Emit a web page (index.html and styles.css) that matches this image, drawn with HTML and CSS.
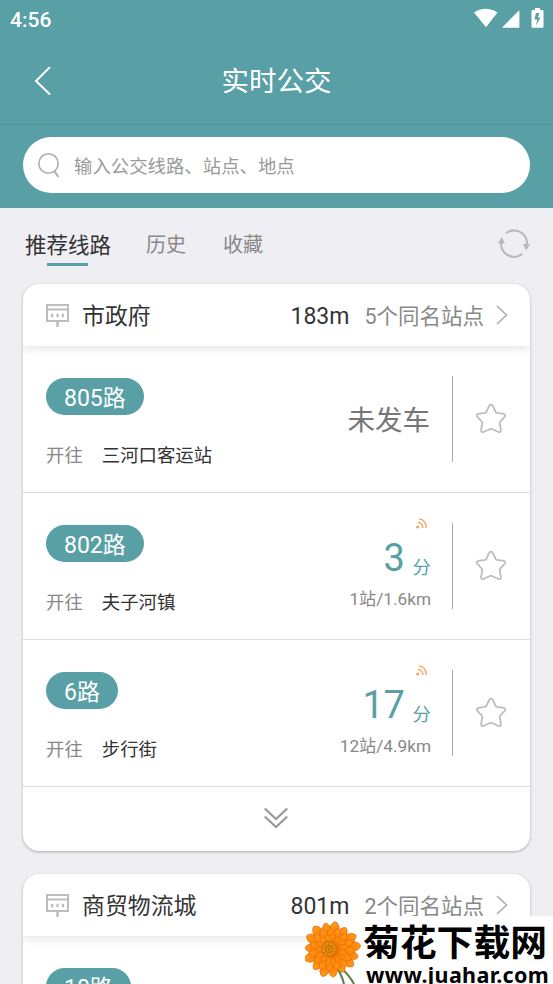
FILE: index.html
```html
<!DOCTYPE html>
<html lang="zh-CN">
<head>
<meta charset="utf-8">
<title>实时公交</title>
<link rel="stylesheet" href="styles.css">
</head>
<body>
<svg class="defs" width="0" height="0">
  <symbol id="board" viewBox="0 0 23 23">
    <path fill="none" stroke="#bdbdbd" stroke-width="2" d="M1 1h21v16H1zM1 5.500h21"/>
    <path fill="#bdbdbd" d="M5 9.700h2.300v3.600H5zM10.400 9.700h2.300v3.600h-2.300zM15.800 9.700h2.300v3.600h-2.300zM10.300 17h2.500v6h-2.500z"/>
  </symbol>
  <symbol id="star" viewBox="0 0 32 32">
    <path fill="none" stroke="#bdbdbd" stroke-width="1.800" stroke-linejoin="round" d="M14.300 2.600Q16 .5 17.700 2.600L20.700 9Q21 9.600 22 9.800L28.500 10.800Q31.400 11.500 29.600 13.800L25.200 18.600Q24.500 19.300 24.700 20.200L25.900 27Q26.100 29.800 23.500 29L17 26Q16 25.500 15 26L8.500 29Q5.900 29.800 6.100 27L7.300 20.200Q7.500 19.300 6.800 18.600L2.400 13.800Q.6 11.500 3.500 10.800L10 9.800Q11 9.600 11.300 9Z"/>
  </symbol>
  <symbol id="next" viewBox="0 0 12 20">
    <path fill="none" stroke="#b0b0b0" stroke-width="1.700" d="M1 1l9.500 9L1 19"/>
  </symbol>
  <symbol id="signal" viewBox="0 0 11 11">
    <circle cx="1.700" cy="9.200" r="1.400" fill="#f0a050"/>
    <path fill="none" stroke="#f0a050" stroke-width="1.300" d="M2 4.300a5 5 0 0 1 4.700 5.700M3 .9a8 8 0 0 1 7.100 9"/>
  </symbol>
</svg>

<header class="top">
  <div class="status">
    <span class="clock">4:56</span>
    <svg class="status-icons" width="72" height="22" viewBox="0 0 72 22" fill="#fff">
      <path d="M0 4.500Q11.500-3 23.500 4.500L12 19.200Z"/>
      <path d="M45.400 2v17.700H28Z"/>
      <path fill-rule="evenodd" d="M58.500 2H61V0h5v2h2.500q1 0 1 1v15.700q0 1-1 1h-10q-1 0-1-1V3q0-1 1-1ZM62 5l-1.500 6.500h2.700L62 17.500l4.500-8h-2.700L65.500 5Z"/>
    </svg>
  </div>
  <div class="titlebar">
    <svg class="back" width="18" height="30" viewBox="0 0 18 30"><path fill="none" stroke="#fff" stroke-width="2" stroke-linecap="round" d="M15.500 .5L2 14l13.500 13"/></svg>
    <h1>实时公交</h1>
  </div>
  <div class="search-area">
    <div class="search">
      <svg width="24" height="26" viewBox="0 0 24 26" fill="none" stroke="#b0b0b0" stroke-width="1.600"><circle cx="10.500" cy="11.500" r="9.700"/><path stroke-width="2" d="M16.300 19.200L20.500 25"/></svg>
      <span>输入公交线路、站点、地点</span>
    </div>
  </div>
</header>

<nav class="tabs">
  <span class="tab active">推荐线路</span>
  <span class="tab">历史</span>
  <span class="tab">收藏</span>
  <svg class="refresh" width="32" height="30" viewBox="0 0 32 30">
    <path fill="none" stroke="#b8b8b8" stroke-width="2" d="M8 4.300A13 13 0 0 1 29 15M24.500 24.800A13 13 0 0 1 3.200 14"/>
    <path fill="#b8b8b8" d="M24.800 15H32l-3.800 6.500ZM0 14.500h7.200L3.600 8.300Z"/>
  </svg>
</nav>

<main class="list">
  <section class="card">
    <div class="station">
      <svg class="board"><use href="#board"/></svg>
      <h2>市政府</h2>
      <span class="distance">183m</span>
      <span class="same">5个同名站点</span>
      <svg class="next"><use href="#next"/></svg>
    </div>
    <div class="route">
      <div class="line"><span class="pill">805路</span><p><span class="to">开往</span>三河口客运站</p></div>
      <div class="eta idle">未发车</div>
      <div class="fav"><svg><use href="#star"/></svg></div>
    </div>
    <div class="route">
      <div class="line"><span class="pill">802路</span><p><span class="to">开往</span>夫子河镇</p></div>
      <div class="eta"><svg class="signal"><use href="#signal"/></svg><div class="minutes"><b>3</b>分</div><div class="remain">1站/1.6km</div></div>
      <div class="fav"><svg><use href="#star"/></svg></div>
    </div>
    <div class="route">
      <div class="line"><span class="pill">6路</span><p><span class="to">开往</span>步行街</p></div>
      <div class="eta"><svg class="signal"><use href="#signal"/></svg><div class="minutes"><b>17</b>分</div><div class="remain">12站/4.9km</div></div>
      <div class="fav"><svg><use href="#star"/></svg></div>
    </div>
    <div class="more">
      <svg width="24" height="21" viewBox="0 0 24 21" fill="none" stroke="#999" stroke-width="2.200"><path d="M.7 .5L12 11 23.300 .5M.7 8.500L12 19 23.300 8.500"/></svg>
    </div>
  </section>

  <section class="card last">
    <div class="station">
      <svg class="board"><use href="#board"/></svg>
      <h2>商贸物流城</h2>
      <span class="distance">801m</span>
      <span class="same">2个同名站点</span>
      <svg class="next"><use href="#next"/></svg>
    </div>
    <div class="route">
      <div class="line"><span class="pill">10路</span></div>
    </div>
  </section>
</main>

<aside class="watermark">
  <svg class="flower" width="60" height="68" viewBox="0 0 60 68">
    <defs>
      <radialGradient id="glow" gradientUnits="userSpaceOnUse" cx="0" cy="0" r="28"><stop offset=".15" stop-color="#d65600"/><stop offset=".5" stop-color="#fa7a05"/><stop offset="1" stop-color="#ff9a18"/></radialGradient>
      <path id="p" d="M0 0C-4-7-6-17-4-24Q0-32 4-24C6-17 4-7 0 0Z"/>
      <g id="tri"><use href="#p"/><use href="#p" transform="rotate(118) scale(.95)"/><use href="#p" transform="rotate(242)"/></g>
      <g id="ring"><use href="#tri"/><use href="#tri" transform="rotate(25) scale(.93)"/><use href="#tri" transform="rotate(50)"/><use href="#tri" transform="rotate(73) scale(1.030)"/><use href="#tri" transform="rotate(97) scale(.96)"/></g>
    </defs>
    <path d="M30 50Q36 56 39 68M36 52Q45 60 49 68" fill="none" stroke="#63804a" stroke-width="2.200"/>
    <g transform="translate(26.500 34)" fill="url(#glow)" stroke="#dc6000" stroke-width=".6">
      <use href="#ring" transform="rotate(8) scale(1.020)"/>
      <use href="#ring" transform="rotate(19) scale(.8)"/>
      <use href="#ring" transform="rotate(5) scale(.56)"/>
    </g>
    <circle cx="24" cy="33" r="8" fill="#d27300"/>
    <circle cx="24" cy="33" r="5.500" fill="none" stroke="#eda02b" stroke-width="2.500" stroke-dasharray="1.500 1.300"/>
    <circle cx="24" cy="33" r="2" fill="none" stroke="#eda02b" stroke-width="1.500" stroke-dasharray="1 1"/>
  </svg>
  <div class="site"><strong>菊花下载网</strong><span>www.juahar.com</span></div>
</aside>
</body>
</html>
```
FILE: styles.css
```css
* { box-sizing: border-box; margin: 0; padding: 0; }
html, body { height: 984px; overflow: hidden; }
body {
  position: relative;
  width: 553px;
  background: #efeef3;
  color: #333;
  font-family: Roboto, "Noto Sans CJK SC", sans-serif;
}
svg { display: block; flex: none; }
.defs { position: absolute; }

.top { background: #58a0a6; color: #fff; height: 208px; }
.status { height: 40px; padding: 0 7px 0 10px; display: flex; justify-content: space-between; align-items: center; }
.clock { font-size: 21px; font-weight: 500; line-height: 24px; }
.status-icons { margin-top: -2px; }
.titlebar { height: 85px; display: flex; align-items: center; border-bottom: 1px solid #4d949a; }
.back { margin-left: 34px; }
.titlebar h1 { flex: 1; font-size: 27.500px; font-weight: 400; text-align: center; padding-right: 52px; line-height: 40px; }
.search-area { height: 83px; padding: 12px 23px 0; }
.search { height: 56px; border-radius: 28px; background: #fff; color: #999; display: flex; align-items: center; padding-left: 15px; font-size: 18.400px; gap: 12px; }

.tabs { height: 76px; display: flex; padding: 20px 23px 0 25px; font-size: 20px; color: #888; }
.tab { height: 40px; line-height: 35px; margin-right: 37px; }
.tab.active { font-size: 21.500px; color: #333; margin-right: 35px; display: flex; flex-direction: column; align-items: center; }
.tab.active::after { content: ""; width: 41px; height: 3px; margin-right: 2px; background: #58a0a6; }
.refresh { margin: 1px 0 0 auto; }

.list { padding: 0 23px; display: flex; flex-direction: column; gap: 23px; }
.card { background: #fff; border-radius: 16px; box-shadow: 0 1px 3px rgba(0,0,0,.28); overflow: hidden; }
.card.last { height: 110px; border-radius: 16px 16px 0 0; }
.station { height: 62px; display: flex; align-items: center; padding: 0 22px 0 23px; box-shadow: 0 2px 10px rgba(0,0,0,.12); }
.board { width: 23px; height: 23px; }
.station h2 { font-size: 22.900px; font-weight: 400; margin-left: 13px; line-height: 34px; padding-top: 3px; }
.distance { font-size: 23px; margin-left: auto; margin-right: 15px; padding-top: 2px; }
.same { font-size: 21.500px; line-height: 32px; padding-top: 4px; color: #888; }
.next { width: 12px; height: 20px; margin-left: 12px; }
.route { height: 147px; display: flex; border-bottom: 1px solid #ddd; padding-left: 23px; }
.line { flex: 1; padding-top: 32px; }
.pill { display: inline-block; height: 37px; border-radius: 19px; background: #58a0a6; color: #fff; font-size: 23px; line-height: 41px; padding: 0 18px; vertical-align: top; }
.line p { font-size: 18.400px; line-height: 28px; margin-top: 27px; }
.to { color: #888; margin-right: 19px; }
.eta { width: 130px; padding: 25px 22px 0 0; display: flex; flex-direction: column; align-items: flex-end; }
.idle { font-size: 27.500px; line-height: 40px; padding-top: 55px; color: #777; }
.signal { width: 11px; height: 11px; margin-right: 3px; }
.minutes { color: #58a0a6; font-size: 18.400px; line-height: 65px; height: 44px; margin: 6px -1px 0 0; display: flex; }
.minutes b { font-size: 38px; font-weight: 400; line-height: 47px; margin-right: 8px; letter-spacing: -.3px; }
.remain { font-size: 17.200px; line-height: 26px; margin-top: 7px; margin-right: -1px; color: #888; }
.fav { width: 78px; height: 86px; margin-top: 30px; border-left: 1px solid #aaa; display: flex; align-items: center; padding-left: 22px; }
.fav svg { width: 32px; height: 32px; }
.more { height: 62px; display: flex; align-items: center; padding-left: 241px; margin-bottom: 2px; }

.watermark { position: absolute; left: 305px; top: 916px; width: 248px; height: 68px; background: #fff; display: flex; overflow: hidden; color: #000; }
.site { display: flex; flex-direction: column; margin-left: -2px; padding-top: 9px; white-space: nowrap; }
.site strong { font-size: 36.800px; line-height: 38px; font-weight: 700; }
.site span { font: 700 21.500px/24px "Noto Sans", sans-serif; letter-spacing: .35px; margin-left: 3px; }
```
